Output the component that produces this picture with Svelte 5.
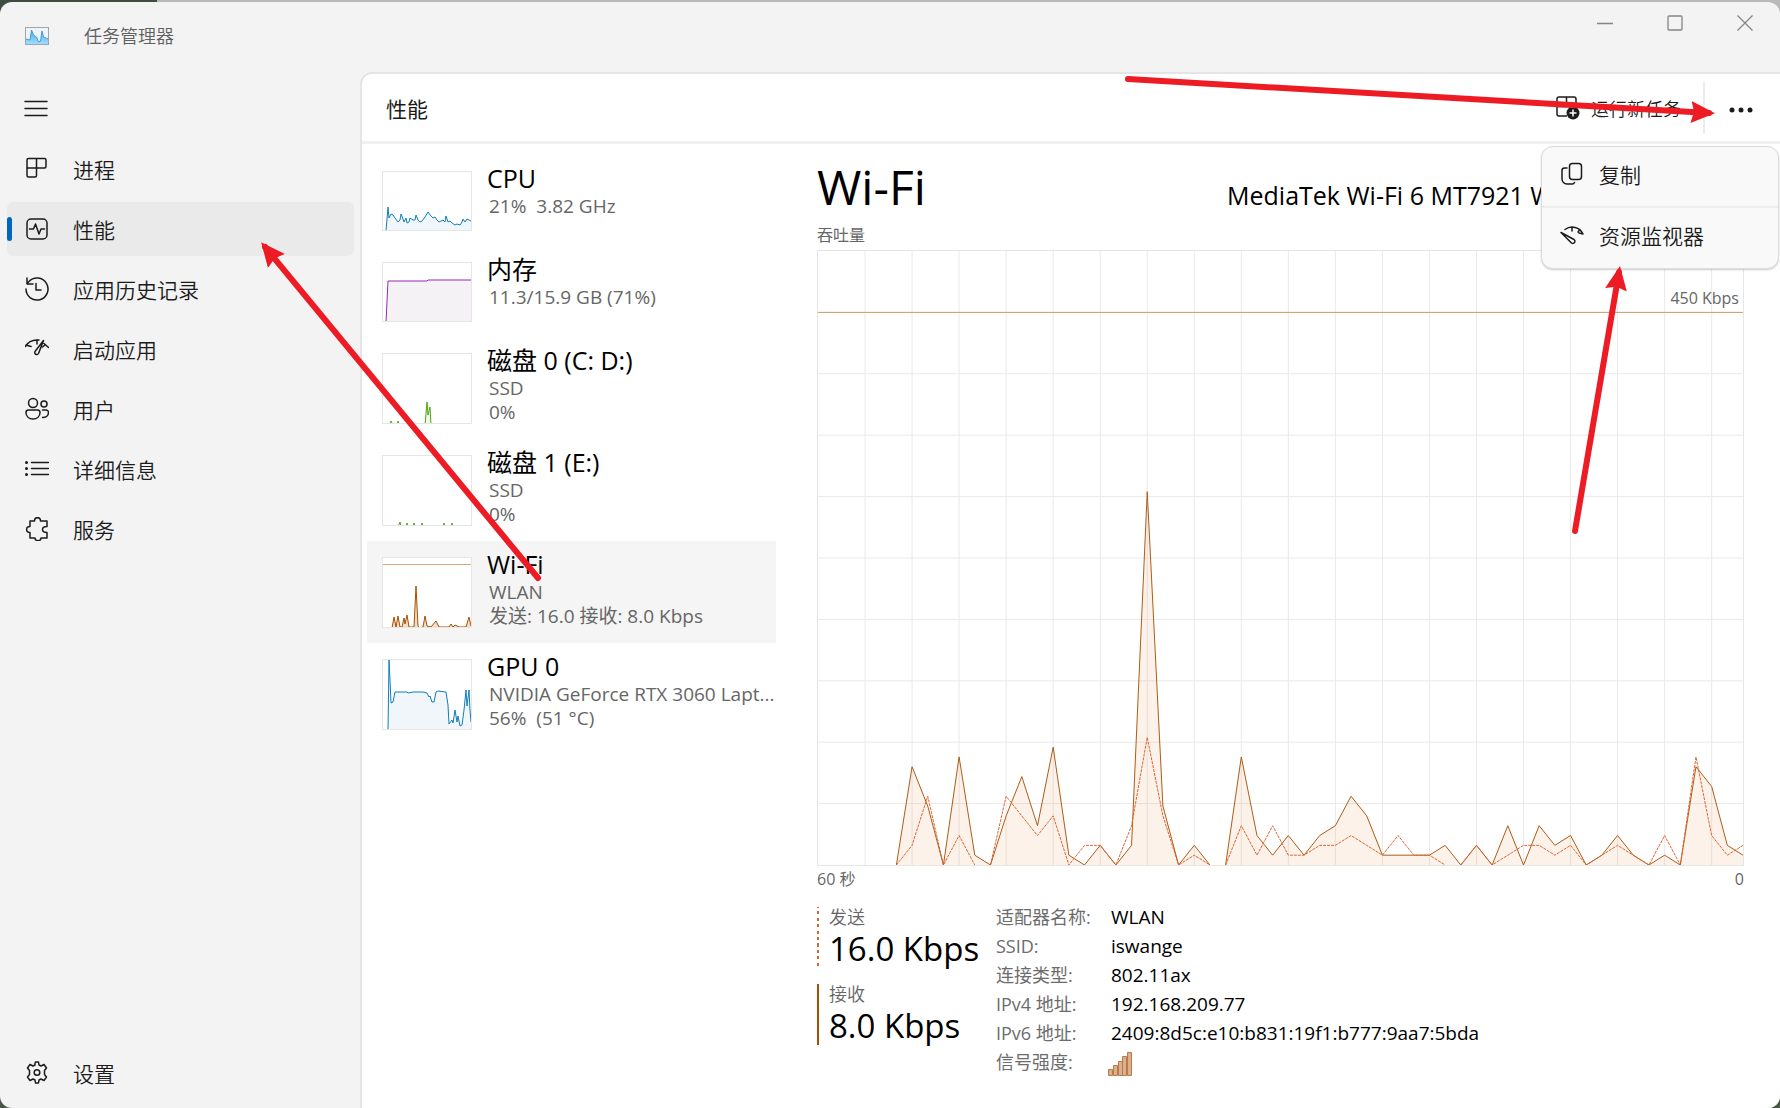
<script lang="ts">
	interface Resource {
		name: string;
		lines: string[];
		color: string;
		fill: string;
		small?: boolean;
		points: string;
		limit?: boolean;
	}

	// One unit is 8 Kbps, one sample per second, oldest first
	const received = [
		0, 0, 0, 0, 0, 0, 10, 6, 0, 11, 1, 0, 5, 9, 4, 12, 1, 0, 2, 0, 2, 38, 6, 0, 2, 0, 0, 11, 3, 1,
		3, 1, 3, 4, 7, 5, 1, 1, 1, 1, 2, 0, 2, 0, 4, 0, 4, 2, 3, 0, 1, 3, 1, 0, 1, 0, 10, 8, 2, 1
	];
	const sent = [
		0, 0, 0, 0, 0, 0, 2, 7, 0, 3, 0, 0, 7, 5, 3, 5, 0, 2, 2, 0, 4, 13, 5, 0, 1, 0, 0, 4, 1, 4,
		1, 1, 2, 2, 3, 2, 1, 3, 1, 1, 0, 0, 2, 0, 1, 2, 2, 1, 2, 0, 1, 2, 1, 0, 3, 0, 11, 3, 1, 2
	];

	const step = 1000 / 59;
	const columns = Array.from({ length: 19 }, (_, i) => (i + 1) * step * 3);
	const rows = Array.from({ length: 9 }, (_, i) => (i + 1) * 50);

	// Seconds without traffic leave a gap in the line
	function toPath(values: number[]) {
		let d = '';
		let drawing = false;
		values.forEach((v, i) => {
			if (i === 0) return;
			if (v === 0 && values[i - 1] === 0) {
				drawing = false;
				return;
			}
			if (!drawing) d += `M${(i - 1) * step} ${500 - values[i - 1] * 8}`;
			d += `L${i * step} ${500 - v * 8}`;
			drawing = true;
		});
		return d;
	}

	const receivedPath = toPath(received);
	const sentPath = toPath(sent);
	const areaPath = 'M0 500' + received.map((v, i) => `L${i * step} ${500 - v * 8}`).join('') + 'L1000 500Z';

	const resources: Resource[] = [
		{
			name: 'CPU',
			lines: ['21%  3.82 GHz'],
			color: '#117dbb',
			fill: '#f1f6fa',
			small: true,
			points:
				'3,59 5,35 6,46 8,42 10,43 12,46 15,50 17,48 18,42 19,44 21,50 23,46 24,51 26,50 27,46 30,48 32,48 33,43 35,48 37,50 39,49 42,45 45,40 48,44 50,46 52,45 54,48 56,50 58,49 60,48 62,50 63,44 65,50 67,49 69,51 72,53 74,52 77,53 79,50 80,47 82,50 84,47 86,48 88,49'
		},
		{
			name: '内存',
			lines: ['11.3/15.9 GB (71%)'],
			color: '#9528b4',
			fill: '#f4f2f4',
			small: true,
			points: '3,59 5,18 44,18 45,17 88,17'
		},
		{
			name: '磁盘 0 (C: D:)',
			lines: ['SSD', '0%'],
			color: '#4da60c',
			fill: '#eff7e9',
			points: '6,71 8,67 10,71 14,71 15,67 16,71 42,71 44,48 45,61 47,53 48,71'
		},
		{
			name: '磁盘 1 (E:)',
			lines: ['SSD', '0%'],
			color: '#4da60c',
			fill: '#eff7e9',
			points: '15,71 17,66 18,71 23,71 24,67 25,71 30,71 31,67 32,71 38,71 39,67 40,71 60,71 61,67 62,71 68,71 69,67 70,71'
		},
		{
			name: 'Wi-Fi',
			lines: ['WLAN', '发送: 16.0 接收: 8.0 Kbps'],
			color: '#a74f01',
			fill: '#f6dcc8',
			points:
				'9,70 11,59 13,69 15,58 17,69 19,69 21,60 22,66 24,57 26,69 31,69 33,28 35,68 37,70 40,69 42,58 44,68 48,69 53,63 56,69 66,69 68,66 70,69 72,67 76,69 83,69 86,59 88,68',
			limit: true
		},
		{
			name: 'GPU 0',
			lines: ['NVIDIA GeForce RTX 3060 Lapt...', '56%  (51 °C)'],
			color: '#117dbb',
			fill: '#f1f6fa',
			points:
				'5,70 6,0 7,20 8,43 10,42 12,32 24,32 25,33 30,32 40,32 44,33 46,37 47,36 49,42 51,42 53,32 55,31 63,32 65,45 66,64 69,60 70,63 72,50 74,62 75,56 77,66 79,65 81,50 83,30 84,46 86,30 87,50 88,62'
		}
	];

	const nav = [
		{ label: '进程', icon: 'processes' },
		{ label: '性能', icon: 'performance' },
		{ label: '应用历史记录', icon: 'history' },
		{ label: '启动应用', icon: 'startup' },
		{ label: '用户', icon: 'users' },
		{ label: '详细信息', icon: 'details' },
		{ label: '服务', icon: 'services' }
	];

	const details = [
		['适配器名称:', 'WLAN'],
		['SSID:', 'iswange'],
		['连接类型:', '802.11ax'],
		['IPv4 地址:', '192.168.209.77'],
		['IPv6 地址:', '2409:8d5c:e10:b831:19f1:b777:9aa7:5bda']
	];

	let page = $state('性能');
	let selected = $state('Wi-Fi');
	let menuOpen = $state(true);
</script>

{#snippet icon(name: string)}
	<svg class="icon" viewBox="0 0 24 24" aria-hidden="true">
		{#if name === 'processes'}
			<path d="M3.500 1.500h16a1.500 1.500 0 0 1 1.500 1.500v6.500a1.500 1.500 0 0 1-1.500 1.500h-8v7.500a1.500 1.500 0 0 1-1.500 1.500H3.500A1.500 1.500 0 0 1 2 18.500V3a1.500 1.500 0 0 1 1.500-1.500zM11.500 1.500v9.500M2 11h9.500" />
		{:else if name === 'performance'}
			<rect x="2" y="2" width="20" height="20" rx="4" />
			<path d="M4.500 12h4l2-5 3.500 10 2-5h3.500" />
		{:else if name === 'history'}
			<path d="M1 12a11 11 0 1 0 3-7.500L2 6.500M2 1v6h6M11 6.500V13h5" />
		{:else if name === 'startup'}
			<path d="M.5 9.500C3 4.500 8 2.500 14 3M1 8l5 1.500M12 3v4M19 6.500l4.500 4M20 8l-2.500 2M18.500 3.500 10 14.500a2 2 0 1 0 3.500 2L18.500 3.500z" />
		{:else if name === 'users'}
			<circle cx="8" cy="6" r="4.500" />
			<circle cx="19" cy="7" r="3" />
			<path d="M1 15.500A2.500 2.500 0 0 1 3.500 13h9a2.500 2.500 0 0 1 2.500 2.500c0 4-3 6.500-7 6.500s-7-2.500-7-6.500zM17.500 13H21a2.500 2.500 0 0 1 2.500 2.500c0 3-2.500 5-6 5" />
		{:else if name === 'details'}
			<path d="M6.500 5.500h17M6.500 11.500h17M6.500 17.500h17" />
			<path class="dots" d="M1.500 5.500h.01M1.500 11.500h.01M1.500 17.500h.01" />
		{:else if name === 'services'}
			<path d="M5 4h4.500c0-4.500 6-4.500 6 0H22v5.500c-6 0-6 6 0 6V21h-6c0 3.500-6 3.500-6 0H5v-5.500c-4.500 0-4.500-6 0-6z" />
		{:else if name === 'settings'}
			<path d="M10 2.500 10.500 1h3l.5 3 2 1 3-1.500 2.500 3.500-2 2.500v4l2 2.500-2.500 3.500-3-1.500-2 1-.5 3h-3l-.5-3-2-1-3 1.500L2.500 16l2-2.500v-4l-2-2.500L5 3.500 8 5l2-1z" />
			<circle cx="12" cy="11.500" r="2.800" />
		{:else if name === 'copy'}
			<rect x="9.500" y="1.500" width="12" height="16" rx="3" />
			<path d="M7 6H4.500A2.500 2.500 0 0 0 2 8.500V17a5 5 0 0 0 5 5h5a2.500 2.500 0 0 0 2.500-1.500" />
		{:else if name === 'monitor'}
			<path d="M5 6.500C11 2 20 4 23 11l-4-1M12 4.500V8M18 9l2-2.500M1 9.500l13 7a2 2 0 0 1-2.500 3.500L1 9.500z" />
		{/if}
	</svg>
{/snippet}

<div class="desktop">
	<div class="window">
		<header class="titlebar">
			<svg class="app-icon" viewBox="0 0 24 18" aria-hidden="true">
				<defs>
					<linearGradient id="wave" x1="0" y1="0" x2="0" y2="1">
						<stop offset="0" stop-color="#4aa8e8" />
						<stop offset="1" stop-color="#a5dcfb" />
					</linearGradient>
				</defs>
				<rect x=".5" y=".5" width="23" height="17" fill="#f0f4f8" stroke="#9aa6b4" />
				<path d="M1 12l4 1 1.500-10 2 5 3 2 2 5 2-1L17 4l1.500 6 4.500 2v5H1z" fill="url(#wave)" />
				<path d="M1 12l4 1 1.500-10 2 5 3 2 2 5 2-1L17 4l1.500 6 4.500 2" fill="none" stroke="#3f9ee0" />
			</svg>
			<span class="app-title">任务管理器</span>
			<div class="window-buttons">
				<button aria-label="最小化"><svg viewBox="0 0 16 16"><path d="M0 8.500h16" /></svg></button>
				<button aria-label="最大化"><svg viewBox="0 0 16 16"><rect x="1" y="1" width="14" height="14" rx="1" /></svg></button>
				<button aria-label="关闭"><svg viewBox="0 0 16 16"><path d="M.5.5l15 15M15.500.5l-15 15" /></svg></button>
			</div>
		</header>

		<div class="body">
			<nav class="sidebar">
				<button class="hamburger" aria-label="打开导航">
					<svg class="icon" viewBox="0 0 24 24"><path d="M1 4.500h22M1 11.500h22M1 18.500h22" /></svg>
				</button>
				{#each nav as item}
					<button class="nav-item" class:active={page === item.label} onclick={() => (page = item.label)}>
						{@render icon(item.icon)}
						<span>{item.label}</span>
					</button>
				{/each}
				<button class="nav-item settings">
					{@render icon('settings')}
					<span>设置</span>
				</button>
			</nav>

			<main class="content">
				<div class="toolbar">
					<h1>性能</h1>
					<button class="new-task">
						<svg class="task-icon" viewBox="0 0 24 24" aria-hidden="true">
							<path d="M11 20H3a2 2 0 0 1-2-2V3a2 2 0 0 1 2-2h15a2 2 0 0 1 2 2v7M1 10.500h10M10.500 1v9.500" />
							<circle cx="17" cy="17" r="6.500" />
							<path class="plus" d="M17 13.500v7M13.500 17h7" />
						</svg>
						运行新任务
					</button>
					<button class="more" aria-label="更多选项" onclick={() => (menuOpen = !menuOpen)}>
						<svg viewBox="0 0 24 6"><circle cx="3" cy="3" r="2.500" /><circle cx="12" cy="3" r="2.500" /><circle cx="21" cy="3" r="2.500" /></svg>
					</button>
					{#if menuOpen}
						<div class="menu">
							<button>{@render icon('copy')}复制</button>
							<button>{@render icon('monitor')}资源监视器</button>
						</div>
					{/if}
				</div>

				<div class="panes">
					<div class="resources">
						{#each resources as r}
							<button class="resource" class:small={r.small} class:selected={selected === r.name} onclick={() => (selected = r.name)}>
								<svg class="thumb" viewBox={r.small ? '0 0 88 58' : '0 0 88 69'} aria-hidden="true">
									<polygon points="{r.points} 88,72 3,72" fill={r.fill} />
									<polyline points={r.points} fill="none" stroke={r.color} />
									{#if r.limit}
										<path d="M0 6.500h88" stroke="#d9a77a" />
									{/if}
								</svg>
								<span class="info">
									<span class="name">{r.name}</span>
									{#each r.lines as line}
										<span class="line">{line}</span>
									{/each}
								</span>
							</button>
						{/each}
					</div>

					<section class="detail">
						<div class="heading">
							<h2>Wi-Fi</h2>
							<span class="adapter">MediaTek Wi-Fi 6 MT7921 Wireless LAN Card</span>
						</div>
						<div class="caption">吞吐量</div>
						<div class="chart">
							<svg viewBox="0 0 1000 500" preserveAspectRatio="none" role="img" aria-label="吞吐量">
								{#each columns as x}
									<path class="grid" d="M{x} 0V500" />
								{/each}
								{#each rows as y}
									<path class="grid" d="M0 {y}H1000" />
								{/each}
								<path class="area" d={areaPath} />
								<path class="received" d={receivedPath} />
								<path class="sent" d={sentPath} />
								<path class="limit" d="M0 50H1000" />
							</svg>
							<span class="limit-label">450 Kbps</span>
						</div>
						<div class="axis"><span>60 秒</span><span>0</span></div>

						<div class="stats">
							<div class="rates">
								<div class="rate dashed">
									<span>发送</span>
									<strong>16.0 Kbps</strong>
								</div>
								<div class="rate">
									<span>接收</span>
									<strong>8.0 Kbps</strong>
								</div>
							</div>
							<table>
								<tbody>
									{#each details as [label, value]}
										<tr><th scope="row">{label}</th><td>{value}</td></tr>
									{/each}
									<tr>
										<th scope="row">信号强度:</th>
										<td>
											<svg class="signal" viewBox="0 0 24 24" role="img" aria-label="5/5">
												<path d="M.5 17.500h4v6h-4zM5.500 13.500h4v10h-4zM10.500 9.500h4v14h-4zM14.500 4.500h4v19h-4zM19.500.5h4v23h-4z" />
											</svg>
										</td>
									</tr>
								</tbody>
							</table>
						</div>
					</section>
				</div>
			</main>
		</div>
	</div>

	<!-- Arrows pointing at the steps to follow -->
	<svg class="arrows" viewBox="0 0 1780 1108" preserveAspectRatio="none" aria-hidden="true">
		<defs>
			<marker id="head" viewBox="0 0 24 24" refX="18" refY="12" markerWidth="24" markerHeight="24" markerUnits="userSpaceOnUse" orient="auto">
				<path d="M24 12 0 1 3 12 0 23z" />
			</marker>
		</defs>
		<path d="M538 578 265 247" marker-end="url(#head)" />
		<path d="M1128 79 1709 113" marker-end="url(#head)" />
		<path d="M1575 531 1619 272" marker-end="url(#head)" />
	</svg>
</div>

<style>
	:global(body) {
		background: #4a5646;
	}

	.desktop {
		position: relative;
		min-height: 100vh;
		display: flex;
		padding-top: 2px;
		box-sizing: border-box;
		background: linear-gradient(90deg, #3f4d40 157px, #b9b9b9 157px) top / 100% 50% no-repeat, #4a5646;
		font-family: 'Open Sans', 'Noto Sans CJK SC', sans-serif;
		color: #1b1b1b;
	}

	.window {
		flex: 1;
		min-width: 0;
		display: flex;
		flex-direction: column;
		background: #f3f3f3;
		border-radius: 12px;
		overflow: hidden;
	}

	button {
		background: none;
		border: none;
		padding: 0;
		margin: 0;
		font: inherit;
		color: inherit;
		text-align: left;
	}

	h1,
	h2 {
		margin: 0;
		font-weight: 400;
	}

	.titlebar {
		display: flex;
		align-items: flex-start;
		height: 70px;
		padding-left: 25px;
	}

	.app-icon {
		width: 24px;
		height: 18px;
		margin-top: 25px;
	}

	.app-title {
		margin: 20px auto 0 35px;
		font-size: 18px;
		line-height: 28px;
		font-weight: 350;
		color: #606060;
	}

	.window-buttons {
		display: flex;
	}

	.window-buttons button {
		width: 70px;
		height: 41px;
		display: flex;
		align-items: center;
		justify-content: center;
	}

	.window-buttons svg {
		width: 16px;
		height: 16px;
		fill: none;
		stroke: #858585;
		stroke-width: 1.3;
	}

	.body {
		flex: 1;
		display: flex;
		min-height: 0;
	}

	.sidebar {
		width: 360px;
		flex-shrink: 0;
		box-sizing: border-box;
		display: flex;
		flex-direction: column;
		gap: 6px;
		padding: 9px 6px 8px 7px;
	}

	.icon {
		width: 24px;
		height: 24px;
		flex-shrink: 0;
		fill: none;
		stroke: #1b1b1b;
		stroke-width: 1.5;
		stroke-linejoin: round;
		stroke-linecap: round;
	}

	.dots {
		stroke-width: 3;
	}

	.hamburger {
		display: flex;
		align-items: center;
		height: 55px;
		padding-left: 17px;
	}

	.nav-item {
		position: relative;
		display: flex;
		align-items: center;
		gap: 24px;
		height: 54px;
		padding-left: 18px;
		border-radius: 6px;
		font-size: 21px;
		font-weight: 350;
	}

	.nav-item.active {
		background: #eaeaea;
	}

	.nav-item.active::before {
		content: '';
		position: absolute;
		left: 0;
		top: 15px;
		width: 5px;
		height: 24px;
		border-radius: 3px;
		background: #0067c0;
	}

	.settings {
		margin-top: auto;
	}

	.content {
		flex: 1;
		min-width: 0;
		display: flex;
		flex-direction: column;
		background: #fff;
		border: 2px solid #e5e5e5;
		border-width: 2px 0 0 2px;
		border-radius: 12px 0 0 0;
	}

	.toolbar {
		position: relative;
		display: flex;
		align-items: center;
		height: 67px;
		border-bottom: 3px solid #f0f0f0;
		padding-left: 24px;
	}

	h1 {
		font-size: 21px;
		margin-right: auto;
	}

	.new-task {
		display: flex;
		align-items: center;
		gap: 11px;
		height: 53px;
		padding: 1px 22px 0 0;
		border-right: 2px solid #ededed;
		font-size: 18px;
		font-weight: 350;
	}

	.task-icon {
		width: 24px;
		height: 24px;
		fill: none;
		stroke: #1b1b1b;
		stroke-width: 1.5;
	}

	.task-icon circle {
		fill: #1b1b1b;
		stroke: none;
	}

	.task-icon .plus {
		stroke: #fff;
	}

	.more {
		width: 75px;
		height: 53px;
		padding: 4px 4px 0 0;
		display: flex;
		align-items: center;
		justify-content: center;
	}

	.more svg {
		width: 24px;
		height: 6px;
		fill: #1b1b1b;
	}

	.menu {
		position: absolute;
		top: 72px;
		right: 1px;
		width: 238px;
		z-index: 2;
		box-sizing: border-box;
		background: #f9f9f9;
		border: 1px solid #dcdcdc;
		border-radius: 12px;
		box-shadow: 0 1px 2px rgba(0, 0, 0, 0.2);
	}

	.menu button {
		display: flex;
		align-items: center;
		gap: 15px;
		width: 100%;
		height: 59px;
		padding: 0 0 6px 18px;
		font-size: 21px;
		font-weight: 350;
	}

	.menu button + button {
		height: 62px;
		border-top: 2px solid #ededed;
	}

	.panes {
		flex: 1;
		display: flex;
		min-height: 0;
	}

	.resources {
		width: 409px;
		flex-shrink: 0;
		padding: 11px 0 0 5px;
		box-sizing: border-box;
		width: 414px;
	}

	.resource {
		display: flex;
		align-items: flex-start;
		gap: 15px;
		width: 100%;
		height: 102px;
		box-sizing: border-box;
		padding: 7px 0 0 15px;
	}

	.resource.small {
		height: 91px;
	}

	.resource.selected {
		background: #f5f5f5;
	}

	.thumb {
		width: 88px;
		height: 69px;
		flex-shrink: 0;
		margin-top: 9px;
		background: #fff;
		border: 1px solid #e6e6e6;
	}

	.small .thumb {
		height: 58px;
	}

	.info {
		min-width: 0;
		display: flex;
		flex-direction: column;
	}

	.name {
		font-size: 25px;
		line-height: 32px;
		color: #000;
	}

	.line {
		padding-left: 2px;
		font-size: 19px;
		line-height: 24px;
		color: #666;
		white-space: pre;
	}

	.detail {
		flex: 1;
		min-width: 0;
		padding: 10px 36px 0 41px;
		display: flex;
		flex-direction: column;
	}

	.heading {
		display: flex;
		align-items: baseline;
		gap: 24px;
		height: 68px;
	}

	h2 {
		font-size: 48px;
		line-height: 65px;
		color: #000;
		white-space: nowrap;
		margin-right: auto;
	}

	.adapter {
		font-size: 25px;
		color: #000;
		white-space: nowrap;
		overflow: hidden;
		text-overflow: ellipsis;
	}

	.caption,
	.axis {
		font-size: 16px;
		line-height: 26px;
		padding-bottom: 2px;
		color: #666;
	}

	.chart {
		position: relative;
		flex: 1;
		min-height: 200px;
		border: 1px solid #e6e6e6;
	}

	.chart svg {
		position: absolute;
		width: 100%;
		height: 100%;
	}

	.chart path {
		fill: none;
		vector-effect: non-scaling-stroke;
	}

	.chart .grid {
		stroke: #e9e9e9;
	}

	.chart .area {
		fill: rgba(230, 126, 45, 0.1);
	}

	.chart .received {
		stroke: #ad5c17;
	}

	.chart .sent {
		stroke: #e0622d;
		stroke-dasharray: 3 1;
	}

	.chart .limit {
		stroke: #d29b66;
	}

	.limit-label {
		position: absolute;
		top: 34px;
		right: 4px;
		font-size: 16px;
		line-height: 26px;
		color: #666;
	}

	.axis {
		display: flex;
		justify-content: space-between;
	}

	.stats {
		display: flex;
		gap: 18px;
		padding: 13px 0 27px;
	}

	.rates {
		display: flex;
		flex-direction: column;
		gap: 16px;
		width: 161px;
	}

	.rate {
		display: flex;
		flex-direction: column;
		height: 61px;
		padding-left: 10px;
		border-left: 2px solid #a74f01;
		white-space: nowrap;
	}

	.rate.dashed {
		border-image: repeating-linear-gradient(#e0622d 0 3px, transparent 3px 6px) 2;
	}

	.rate span {
		font-size: 18px;
		line-height: 20px;
		font-weight: 350;
		color: #666;
	}

	.rate strong {
		font-size: 33px;
		line-height: 44px;
		font-weight: 400;
		color: #000;
	}

	table {
		border-collapse: collapse;
		align-self: flex-start;
	}

	th,
	td {
		height: 29px;
		padding: 0;
		font-size: 19px;
		line-height: 20px;
		font-weight: 400;
		text-align: left;
		vertical-align: top;
		color: #000;
	}

	th {
		width: 115px;
		font-size: 18px;
		color: #6c6c6c;
	}

	.signal {
		display: block;
		width: 24px;
		height: 24px;
		margin-left: -3px;
		fill: #dbb08c;
		stroke: #b87a4b;
	}

	.arrows {
		position: absolute;
		inset: 0;
		width: 100%;
		height: 100%;
		z-index: 3;
		pointer-events: none;
		fill: none;
		stroke: #ed1c24;
		stroke-width: 6;
		stroke-linecap: round;
	}

	.arrows marker path {
		fill: #ed1c24;
		stroke: none;
	}
</style>
